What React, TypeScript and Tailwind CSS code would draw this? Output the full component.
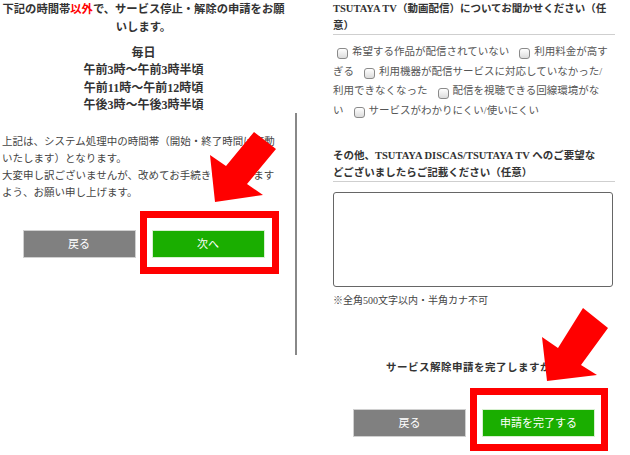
import React from 'react';

function Checkbox() {
  return (
    <span className="mx-[4px] inline-block h-[11px] w-[11px] translate-y-[1px] rounded-[3px] border border-[#8a8a8a] bg-gradient-to-b from-white to-[#dcdcdc] align-middle" />
  );
}

function GrayButton({ label }: { label: string }) {
  return (
    <div className="flex h-[28px] w-[113px] items-center justify-center border border-[#d0d0d0] bg-[#808080] text-[11px] text-white">
      {label}
    </div>
  );
}

function GreenButton({ label, box }: { label: string; box: string }) {
  return (
    <div className="relative">
      <div className={box} />
      <div className="flex h-[28px] w-[113px] items-center justify-center border border-[#d7f0d0] bg-[#1aae00] text-[11px] text-white">
        {label}
      </div>
    </div>
  );
}

export default function App() {
  return (
    <div className="relative flex h-[455px] w-[630px] overflow-hidden bg-white font-['Liberation_Serif','Noto_Sans_CJK_JP',serif] text-[#333]">
      {/* Left screen */}
      <section className="flex w-[287px] shrink-0 flex-col">
        <p className="whitespace-nowrap text-center text-[11.3px] font-bold leading-[18px]">
          下記の時間帯<span className="text-[#ff0000]">以外</span>で、サービス停止・解除の申請をお願
          <br />
          いします。
        </p>
        <div className="mt-[9px] text-center text-[12px] font-bold leading-[17.3px]">
          毎日
          <br />
          午前3時〜午前3時半頃
          <br />
          午前11時〜午前12時頃
          <br />
          午後3時〜午後3時半頃
        </div>
        <div className="mt-[19px] whitespace-nowrap pl-[2px] text-[10.5px] leading-[17px] text-[#444]">
          上記は、システム処理中の時間帯（開始・終了時間は変動
          <br />
          いたします）となります。
          <br />
          大変申し訳ございませんが、改めてお手続きいただけます
          <br />
          よう、お願い申し上げます。
        </div>
        <div className="mt-[29px] flex justify-center gap-[16px]">
          <GrayButton label="戻る" />
          <GreenButton
            label="次へ"
            box="absolute -left-[12px] -top-[19px] h-[63px] w-[139px] border-[7px] border-[#ff0000]"
          />
        </div>
      </section>

      {/* Divider between the two screens */}
      <div className="ml-[8px] mt-[113px] h-[242px] w-[2px] shrink-0 bg-[#888]" />

      {/* Right screen */}
      <section className="ml-[36px] flex w-[282px] shrink-0 flex-col">
        <p className="whitespace-nowrap border-b border-[#cfcfcf] text-[10.5px] font-bold leading-[17px]">
          TSUTAYA TV（動画配信）についてお聞かせください（任
          <br />
          意）
        </p>
        <div className="mt-[7px] whitespace-nowrap text-[10.5px] leading-[19.7px] text-[#555]">
          <div>
            <Checkbox />
            希望する作品が配信されていない
            <span className="ml-[6px]" />
            <Checkbox />
            利用料金が高す
          </div>
          <div>
            ぎる<span className="ml-[6px]" />
            <Checkbox />
            利用機器が配信サービスに対応していなかった/
          </div>
          <div>
            利用できなくなった<span className="ml-[6px]" />
            <Checkbox />
            配信を視聴できる回線環境がな
          </div>
          <div>
            い<span className="ml-[6px]" />
            <Checkbox />
            サービスがわかりにくい/使いにくい
          </div>
        </div>

        <p className="mt-[26px] whitespace-nowrap border-b border-[#cfcfcf] text-[10.5px] font-bold leading-[17px]">
          その他、TSUTAYA DISCAS/TSUTAYA TV へのご要望な
          <br />
          どございましたらご記載ください（任意）
        </p>
        <div className="mt-[10px] h-[95px] w-[280px] rounded-[3px] border border-[#666] bg-white" />
        <p className="mt-[7px] text-[10px] leading-[14px] text-[#444]">※全角500文字以内・半角カナ不可</p>

        <p className="mt-[52px] text-center text-[10.5px] font-bold leading-[16px] tracking-[0.5px]">
          サービス解除申請を完了しますか？
        </p>
        <div className="mt-[33px] flex justify-center gap-[16px]">
          <GrayButton label="戻る" />
          <GreenButton
            label="申請を完了する"
            box="absolute -left-[12px] -top-[21px] h-[63px] w-[138px] border-[7px] border-[#ff0000]"
          />
        </div>
      </section>

      {/* Annotation arrows */}
      <svg
        className="pointer-events-none absolute inset-0"
        width="630"
        height="455"
        viewBox="0 0 630 455"
      >
        <polygon fill="#ff0000" points="215,202 210,155 226,166 254,132 276,149 247,184 263,195" />
        <polygon fill="#ff0000" points="547,381 542,337 558,348 583,308 608,328 581,365 597,375" />
      </svg>
    </div>
  );
}
